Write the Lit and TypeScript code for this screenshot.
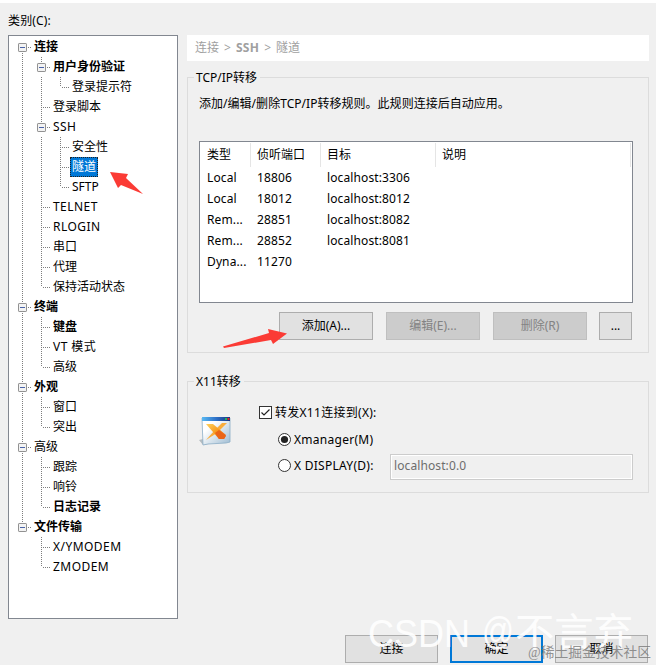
import { LitElement, html, svg, css, nothing } from "lit";
import { customElement, property } from "lit/decorators.js";
import { classMap } from "lit/directives/class-map.js";

// Guides: "v" passes through, "t" branches, "l" ends, "b" is an expander, "." is blank.
type Node = { g: string; label: string; bold?: boolean; on?: boolean; wide?: boolean; up?: boolean; down?: boolean };

const TREE: Node[] = [
  { g: "b", label: "连接", bold: true, down: true },
  { g: "vb", label: "用户身份验证", bold: true, up: true, down: true },
  { g: "vvl", label: "登录提示符" },
  { g: "vt", label: "登录脚本" },
  { g: "vb", label: "SSH", up: true, down: true, wide: true },
  { g: "vvt", label: "安全性" },
  { g: "vvt", label: "隧道", on: true },
  { g: "vvl", label: "SFTP" },
  { g: "vt", label: "TELNET", wide: true },
  { g: "vt", label: "RLOGIN", wide: true },
  { g: "vt", label: "串口" },
  { g: "vt", label: "代理" },
  { g: "vl", label: "保持活动状态" },
  { g: "b", label: "终端", bold: true, up: true, down: true },
  { g: "vt", label: "键盘", bold: true },
  { g: "vt", label: "VT 模式", wide: true },
  { g: "vl", label: "高级" },
  { g: "b", label: "外观", bold: true, up: true, down: true },
  { g: "vt", label: "窗口" },
  { g: "vl", label: "突出" },
  { g: "b", label: "高级", up: true, down: true },
  { g: "vt", label: "跟踪" },
  { g: "vt", label: "响铃" },
  { g: "vl", label: "日志记录", bold: true },
  { g: "b", label: "文件传输", bold: true, up: true },
  { g: ".t", label: "X/YMODEM", wide: true },
  { g: ".l", label: "ZMODEM", wide: true },
];

const RULES = [
  ["Local", "18806", "localhost:3306"],
  ["Local", "18012", "localhost:8012"],
  ["Rem...", "28851", "localhost:8082"],
  ["Rem...", "28852", "localhost:8081"],
  ["Dyna...", "11270", ""],
];

@customElement("category-tree")
class CategoryTree extends LitElement {
  static styles = css`
    :host { display: block; box-sizing: border-box; width: 170px; height: 584px; border: 1px solid #828790; background: #fff; padding: 1px 0 0 4px; }
    .row { display: flex; height: 20px; }
    .cell { flex: none; width: 19px; height: 20px; }
    .guide { stroke: #7d7d7d; stroke-dasharray: 1 1; fill: none; }
    .label { margin-left: 1px; height: 20px; line-height: 20px; padding: 0 1px; box-sizing: border-box; white-space: pre; }
    .wide { letter-spacing: .45px; }
    .bold { font-weight: 700; }
    .on { margin-left: 0; padding: 0 1px; height: 20px; line-height: 18px; background: #0078d7; color: #fff; border: 1px dotted #222; }
  `;
  cell(n: Node, c: string) {
    const line = (d: string) => svg`<path class="guide" d=${d} shape-rendering="crispEdges"/>`;
    return html`<svg class="cell" viewBox="0 0 19 20">
      ${c === "v" || c === "t" ? line("M9.5 0V20") : nothing}
      ${c === "l" ? line("M9.5 0V10") : nothing}
      ${c === "t" || c === "l" ? line("M11 10.5H18") : nothing}
      ${c === "b"
        ? svg`${n.up ? line("M9.5 0V6") : nothing}${n.down && n.g === "b" ? line("M9.5 16V20") : nothing}
          ${line("M15 10.5H18")}
          <rect x="5.5" y="6.5" width="8" height="8" rx=".6" fill="#f3f3f3" stroke="#919191"/>
          <path d="M7 10.5H12" stroke="#4a63a7"/>`
        : nothing}
    </svg>`;
  }
  render() {
    return TREE.map(
      (n) => html`<div class="row">
        ${[...n.g].map((c) => this.cell(n, c))}
        <span class=${classMap({ label: true, bold: !!n.bold, on: !!n.on, wide: !!n.wide })}>${n.label}</span>
      </div>`
    );
  }
}

@customElement("group-box")
class GroupBox extends LitElement {
  @property() caption = "";
  static styles = css`
    :host { display: block; box-sizing: border-box; border: 1px solid #dcdcdc; }
    .legend { display: block; width: max-content; height: 18px; line-height: 20px; margin: -10px 0 0 6px; padding: 0 3px 0 2px; background: #f0f0f0; }
  `;
  render() {
    return html`<span class="legend">${this.caption}</span><slot></slot>`;
  }
}

@customElement("app-root")
class AppRoot extends LitElement {
  static styles = css`
    :host { display: block; position: relative; box-sizing: border-box; width: 656px; height: 665px; overflow: hidden; border-top: 3px solid #fff; background: #f0f0f0; color: #000; font: 12px/18px "Noto Sans", "Noto Sans CJK SC", sans-serif; }
    .title { height: 18px; padding: 9px 0 5px 8px; letter-spacing: .15px; }
    .main { display: flex; gap: 9px; padding-left: 8px; }
    .right { width: 462px; }
    .crumb { height: 26px; line-height: 25px; background: #fff; color: #a0a0a0; padding-left: 8px; display: flex; gap: 5px; }
    .crumb b { font-weight: 700; letter-spacing: .3px; }
    .tcp { height: 276px; margin-top: 16px; }
    .x11 { height: 112px; margin-top: 28px; }
    .hint { height: 18px; margin: 9px 0 0 11px; letter-spacing: .03px; }
    .list { box-sizing: border-box; width: 434px; height: 162px; margin: 28px 0 0 11px; border: 1px solid #828790; background: #fff; }
    .cols { display: grid; grid-template-columns: 51px 70px 115px 195px; }
    .head { height: 24px; padding-top: 1px; line-height: 24px; }
    .head span { border-right: 1px solid #e5e5e5; padding-left: 7px; }
    .head span:not(:first-child) { padding-left: 6px; }
    .rule { height: 21px; line-height: 21px; letter-spacing: .12px; }
    .rule span { padding-left: 7px; white-space: nowrap; }
    .rule span:not(:first-child) { padding-left: 6px; }
    .buttons { display: flex; gap: 13px; margin: 9px 0 0 91px; }
    .btn { box-sizing: border-box; width: 94px; height: 28px; line-height: 26px; border: 1px solid #adadad; background: #e1e1e1; text-align: center; }
    .off { background: #ccc; border-color: #bfbfbf; color: #838383; }
    .small { width: 33px; margin-left: -1px; }
    .xbody { display: flex; }
    .logo { flex: none; width: 34px; height: 34px; margin: 24px 0 0 11px; }
    .opts { margin: 9px 0 0 26px; letter-spacing: .28px; }
    .line { display: flex; align-items: center; height: 27px; }
    .line svg { flex: none; width: 13px; height: 13px; margin-right: 3px; }
    .last { height: 25px; }
    .sub { padding-left: 19px; }
    .field { box-sizing: border-box; align-self: flex-start; flex: none; width: 243px; height: 26px; margin: 1px 0 0 15px; border: 1px solid #ccc; box-shadow: inset 0 0 0 1px #fff; color: #6d6d6d; line-height: 22px; padding-left: 3px; letter-spacing: .1px; }
    .disp { width: 81px; white-space: nowrap; }
    .footer { display: flex; gap: 12px; padding: 16px 0 0 345px; }
    .footer .btn { width: 93px; }
    .footer .ok { border: 2px solid #0078d7; line-height: 24px; }
    .over { position: absolute; left: 0; top: -3px; width: 656px; height: 665px; pointer-events: none; }
    .mark { font-family: "Liberation Sans", "Noto Sans CJK SC", sans-serif; font-size: 39px; fill: #fff; fill-opacity: .92; }
    .cjk { font-family: "Noto Sans CJK SC", sans-serif; }
    .mark2 { font-family: "Liberation Serif", "Noto Sans CJK SC", sans-serif; font-size: 14px; fill: #777; fill-opacity: .8; }
  `;
  render() {
    return html`
      <div class="title">类别(C):</div>
      <div class="main">
        <category-tree></category-tree>
        <div class="right">
          <div class="crumb"><span>连接</span><span>&gt;</span><b>SSH</b><span>&gt;</span><span>隧道</span></div>
          <group-box class="tcp" caption="TCP/IP转移">
            <div class="hint">添加/编辑/删除TCP/IP转移规则。此规则连接后自动应用。</div>
            <div class="list">
              <div class="cols head"><span>类型</span><span>侦听端口</span><span>目标</span><span>说明</span></div>
              ${RULES.map((r) => html`<div class="cols rule">${r.map((v) => html`<span>${v}</span>`)}</div>`)}
            </div>
            <div class="buttons">
              <div class="btn">添加(A)...</div>
              <div class="btn off">编辑(E)...</div>
              <div class="btn off">删除(R)</div>
              <div class="btn small">...</div>
            </div>
          </group-box>
          <group-box class="x11" caption="X11转移">
            <div class="xbody">
              <svg class="logo" viewBox="0 0 34 34">
                <defs>
                  <linearGradient id="bar" x1="0" x2="1"><stop stop-color="#58b9f3"/><stop offset=".5" stop-color="#2f72c8"/><stop offset="1" stop-color="#17357f"/></linearGradient>
                  <linearGradient id="page" x1="0" y1="0" x2="1" y2="1"><stop offset=".3" stop-color="#fff"/><stop offset="1" stop-color="#9dbbd2"/></linearGradient>
                  <linearGradient id="ex" x1="0" y1="0" x2="1" y2="1"><stop stop-color="#ffd35c"/><stop offset=".5" stop-color="#f79a20"/><stop offset="1" stop-color="#e9500f"/></linearGradient>
                </defs>
                <path d="M0 26L4 25V29L10 28V30L4 31Z" fill="#b4bcc1"/>
                <path d="M3 4H31V28L27 29L9 30L4 31Z" fill="url(#page)" stroke="#8badc6" stroke-width=".8"/>
                <path d="M3 3H31V7H3Z" fill="url(#bar)"/>
                <path d="M26 4H28V6H26Z" fill="#21b35c"/><path d="M28.500 4H30.500V6H28.500Z" fill="#e02828"/>
                <path d="M28 9H23L15 17L7 26L18 19Z" fill="#f9ad3c"/>
                <path d="M7 10H14L27 21L25 25H20L14 18Z" fill="url(#ex)"/>
                <path d="M16 19L20 16L27 22L25 25H20Z" fill="#ea6417"/>
              </svg>
              <div class="opts">
                <div class="line">
                  <svg viewBox="0 0 13 13"><rect x=".5" y=".5" width="12" height="12" fill="#fff" stroke="#333"/><path d="M2.500 6.500L5 9L10.500 3.500" fill="none" stroke="#222" stroke-width="1.2"/></svg>
                  <span>转发X11连接到(X):</span>
                </div>
                <div class="line sub">
                  <svg viewBox="0 0 13 13"><circle cx="6.5" cy="6.5" r="6" fill="#fff" stroke="#333"/><circle cx="6.5" cy="6.5" r="3.6" fill="#222"/></svg>
                  <span>Xmanager(M)</span>
                </div>
                <div class="line sub last">
                  <svg viewBox="0 0 13 13"><circle cx="6.5" cy="6.5" r="6" fill="#fff" stroke="#333"/></svg>
                  <span class="disp">X DISPLAY(D):</span>
                  <div class="field">localhost:0.0</div>
                </div>
              </div>
            </div>
          </group-box>
        </div>
      </div>
      <div class="footer">
        <div class="btn">连接</div><div class="btn ok">确定</div><div class="btn">取消</div>
      </div>
      <svg class="over" viewBox="0 0 656 665">
        <path d="M110 172L128 174L126 178L143 194L121 185L118 188Z" fill="#fb3b35"/>
        <path d="M223 346.500L269 333L268 329L287 333.500L273 344L271 340L224 348Z" fill="#fb3b35"/>
        <text class="mark" x="368" y="647" textLength="102" lengthAdjust="spacingAndGlyphs">CSDN</text>
        <text class="mark" x="482" y="644" textLength="32" lengthAdjust="spacingAndGlyphs" font-size="33">@</text>
        <text class="mark cjk" x="515" y="646" textLength="118" lengthAdjust="spacingAndGlyphs">不言弃</text>
        <text class="mark2" x="528" y="657" textLength="123" lengthAdjust="spacingAndGlyphs">@稀土掘金技术社区</text>
      </svg>
    `;
  }
}
